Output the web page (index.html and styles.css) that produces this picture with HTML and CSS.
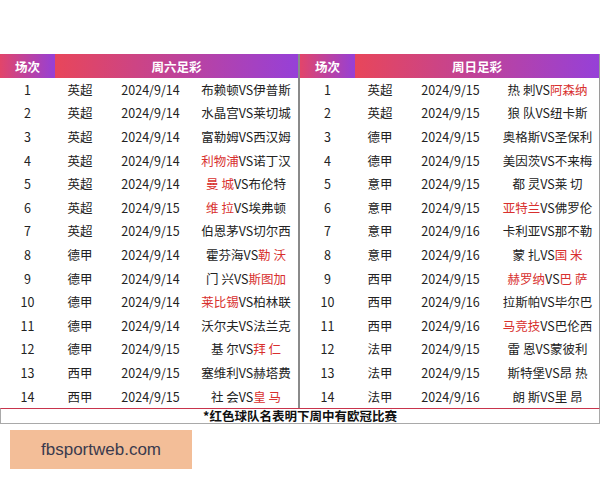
FILE: index.html
```html
<!DOCTYPE html>
<html lang="zh">
<head>
<meta charset="utf-8">
<link rel="stylesheet" href="styles.css">
</head>
<body>
<div class="page">
  <div class="board">
    <div class="half left">
      <div class="hrow"><div class="h">场次</div><div class="h wide">周六足彩</div></div>
      <div class="row"><span>1</span><span>英超</span><span>2024/9/14</span><span>布赖顿VS伊普斯</span></div>
      <div class="row"><span>2</span><span>英超</span><span>2024/9/14</span><span>水晶宫VS莱切城</span></div>
      <div class="row"><span>3</span><span>英超</span><span>2024/9/14</span><span>富勒姆VS西汉姆</span></div>
      <div class="row"><span>4</span><span>英超</span><span>2024/9/14</span><span><em>利物浦</em>VS诺丁汉</span></div>
      <div class="row"><span>5</span><span>英超</span><span>2024/9/14</span><span><em>曼 城</em>VS布伦特</span></div>
      <div class="row"><span>6</span><span>英超</span><span>2024/9/15</span><span><em>维 拉</em>VS埃弗顿</span></div>
      <div class="row"><span>7</span><span>英超</span><span>2024/9/15</span><span>伯恩茅VS切尔西</span></div>
      <div class="row"><span>8</span><span>德甲</span><span>2024/9/14</span><span>霍芬海VS<em>勒 沃</em></span></div>
      <div class="row"><span>9</span><span>德甲</span><span>2024/9/14</span><span>门 兴VS<em>斯图加</em></span></div>
      <div class="row"><span>10</span><span>德甲</span><span>2024/9/14</span><span><em>莱比锡</em>VS柏林联</span></div>
      <div class="row"><span>11</span><span>德甲</span><span>2024/9/14</span><span>沃尔夫VS法兰克</span></div>
      <div class="row"><span>12</span><span>德甲</span><span>2024/9/15</span><span>基 尔VS<em>拜 仁</em></span></div>
      <div class="row"><span>13</span><span>西甲</span><span>2024/9/15</span><span>塞维利VS赫塔费</span></div>
      <div class="row"><span>14</span><span>西甲</span><span>2024/9/15</span><span>社 会VS<em>皇 马</em></span></div>
    </div>
    <div class="half right">
      <div class="hrow"><div class="h">场次</div><div class="h wide">周日足彩</div></div>
      <div class="row"><span>1</span><span>英超</span><span>2024/9/15</span><span>热 刺VS<em>阿森纳</em></span></div>
      <div class="row"><span>2</span><span>英超</span><span>2024/9/15</span><span>狼 队VS纽卡斯</span></div>
      <div class="row"><span>3</span><span>德甲</span><span>2024/9/15</span><span>奥格斯VS圣保利</span></div>
      <div class="row"><span>4</span><span>德甲</span><span>2024/9/15</span><span>美因茨VS不来梅</span></div>
      <div class="row"><span>5</span><span>意甲</span><span>2024/9/15</span><span>都 灵VS莱 切</span></div>
      <div class="row"><span>6</span><span>意甲</span><span>2024/9/15</span><span><em>亚特兰</em>VS佛罗伦</span></div>
      <div class="row"><span>7</span><span>意甲</span><span>2024/9/16</span><span>卡利亚VS那不勒</span></div>
      <div class="row"><span>8</span><span>意甲</span><span>2024/9/16</span><span>蒙 扎VS<em>国 米</em></span></div>
      <div class="row"><span>9</span><span>西甲</span><span>2024/9/15</span><span><em>赫罗纳</em>VS<em>巴 萨</em></span></div>
      <div class="row"><span>10</span><span>西甲</span><span>2024/9/16</span><span>拉斯帕VS毕尔巴</span></div>
      <div class="row"><span>11</span><span>西甲</span><span>2024/9/16</span><span><em>马竞技</em>VS巴伦西</span></div>
      <div class="row"><span>12</span><span>法甲</span><span>2024/9/15</span><span>雷 恩VS蒙彼利</span></div>
      <div class="row"><span>13</span><span>法甲</span><span>2024/9/15</span><span>斯特堡VS昂 热</span></div>
      <div class="row"><span>14</span><span>法甲</span><span>2024/9/16</span><span>朗 斯VS里 昂</span></div>
    </div>
  </div>
  <div class="note">*红色球队名表明下周中有欧冠比赛</div>
  <div class="brand">fbsportweb.com</div>
</div>
</body>
</html>
```
FILE: styles.css
```css
html, body {
  margin: 0;
  padding: 0;
  background: #ffffff;
}
.page {
  width: 600px;
  padding-top: 54px;
  font-family: "Noto Sans CJK SC", "Noto Sans", sans-serif;
  font-size: 12.5px;
  color: #222;
}
.board {
  display: flex;
}
.half {
  width: 300px;
  box-sizing: border-box;
}
.half.left {
  border-right: 2px solid #8a8a8a;
}
.half.right {
  border-right: 1px solid #9a9a9a;
}
.hrow {
  display: flex;
  height: 24px;
}
.h {
  width: 55px;
  display: flex;
  align-items: center;
  justify-content: center;
  color: #fff;
  font-weight: bold;
  background: linear-gradient(90deg, #e2456a, #9640d6);
}
.h.wide {
  flex: 1;
  background: linear-gradient(90deg, #e8465a, #9640d8);
}
.row {
  display: grid;
  grid-template-columns: 55px 50px 91px 1fr;
  height: 23.6px;
  align-items: center;
}
.row span {
  text-align: center;
  white-space: nowrap;
  line-height: 16px;
}
.left .row span:last-child {
  padding-right: 2px;
}
.row em {
  font-style: normal;
  color: #d8302e;
}
.note {
  height: 14px;
  border-top: 1px solid #c8344c;
  border-bottom: 1px solid #a9a9a9;
  border-left: 1px solid #a9a9a9;
  border-right: 1px solid #a9a9a9;
  text-align: center;
  font-weight: bold;
  font-size: 12.5px;
  line-height: 14px;
  color: #111;
}
.brand {
  margin: 6px 0 0 10px;
  width: 182px;
  height: 39px;
  background: #f3be98;
  display: flex;
  align-items: center;
  justify-content: center;
  font-family: "Liberation Sans", Arial, sans-serif;
  font-size: 17px;
  color: #3b3b4e;
}
```
